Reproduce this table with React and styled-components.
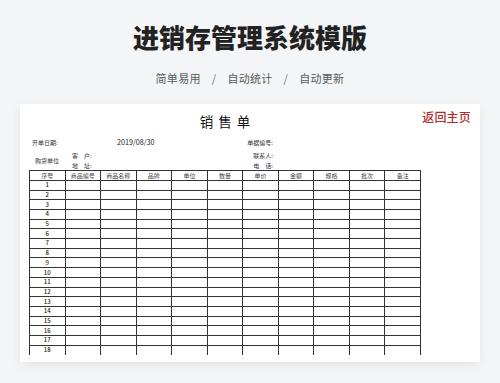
import React from 'react';
import styled, { createGlobalStyle } from 'styled-components';

const GlobalStyle = createGlobalStyle`
  html, body {
    margin: 0;
    padding: 0;
    background: #f4f5f7;
  }
  * {
    box-sizing: border-box;
  }
`;

const font = `"Noto Sans CJK SC", "Noto Sans", sans-serif`;

const COLUMNS = ['序号', '商品编号', '商品名称', '品牌', '单位', '数量', '单价', '金额', '规格', '批次', '备注'];
const ROWS = Array.from({ length: 18 }, (_, i) => i + 1);
const INFO_COLUMNS = '40px 45px 99px 60px 1fr';

const Page = styled.div`
  height: 383px;
  padding: 20px 20px 0;
  background: #f4f5f7;
  font-family: ${font};
  overflow: hidden;
`;

const Title = styled.h1`
  margin: 0;
  font-size: 26px;
  line-height: 34px;
  font-weight: 900;
  color: #222;
  text-align: center;
`;

const Tagline = styled.div`
  margin-top: 16px;
  display: flex;
  justify-content: center;
  font-size: 11px;
  line-height: 16px;
  color: #5a5a5a;
  letter-spacing: 0.3px;
`;

const Slash = styled.span`
  margin: 0 11px;
  color: #777;
`;

const Card = styled.div`
  margin-top: 18px;
  height: 258px;
  background: #fff;
  box-shadow: 0 3px 10px rgba(0, 0, 0, 0.07);
  padding: 7px 9px 0 9px;
  display: grid;
  grid-template-columns: 392px 1fr;
`;

const Sheet = styled.div`
  display: flex;
  flex-direction: column;
`;

const SheetTitle = styled.div`
  height: 20px;
  line-height: 20px;
  font-size: 13.5px;
  letter-spacing: 5px;
  padding-left: 5px;
  text-align: center;
  color: #111;
`;

const InfoGrid = styled.div`
  display: grid;
  grid-template-columns: ${INFO_COLUMNS};
  grid-template-rows: ${(p) => p.$rows};
  align-items: center;
  margin-top: ${(p) => p.$top || 0}px;
  font-size: 6px;
  line-height: 1;
  color: #333;
`;

const Label = styled.div`
  grid-column: ${(p) => p.$col};
  grid-row: ${(p) => p.$row || 'auto'};
  padding-left: ${(p) => p.$indent ?? 3}px;
  text-align: ${(p) => (p.$right ? 'right' : 'left')};
  white-space: pre;
`;

const DateValue = styled.div`
  grid-column: 3;
  padding-left: 3px;
  font-size: 7.2px;
  color: #222;
`;

const Table = styled.table`
  width: 392px;
  border-collapse: collapse;
  table-layout: fixed;
  font-size: 6px;
  line-height: 1;
  color: #333;
`;

const Row = styled.tr`
  height: 9.7px;
`;

const Cell = styled.td`
  padding: 0;
  border: 1px solid #333;
  border-bottom-color: ${(p) => (p.$open ? 'transparent' : '#333')};
  text-align: center;
  vertical-align: middle;
  font-weight: ${(p) => (p.$strong ? 500 : 400)};
  color: ${(p) => (p.$strong ? '#222' : '#444')};
`;

const HeadCell = styled.th`
  padding: 0;
  border: 1px solid #333;
  font-weight: 400;
  text-align: center;
  vertical-align: middle;
  color: #444;
`;

const Aside = styled.div`
  display: flex;
  justify-content: flex-end;
  align-items: flex-start;
`;

const HomeLink = styled.a`
  margin-top: -2px;
  font-size: 12px;
  line-height: 16px;
  font-weight: 500;
  color: #b52d2b;
  text-decoration: none;
  letter-spacing: 0.2px;
`;

const App = () => (
  <Page>
    <GlobalStyle />
    <Title>进销存管理系统模版</Title>
    <Tagline>
      <span>简单易用</span>
      <Slash>/</Slash>
      <span>自动统计</span>
      <Slash>/</Slash>
      <span>自动更新</span>
    </Tagline>
    <Card>
      <Sheet>
        <SheetTitle>销售单</SheetTitle>
        <InfoGrid $rows="10px" $top={6.5}>
          <Label $col={1}>开单日期:</Label>
          <DateValue>2019/08/30</DateValue>
          <Label $col={4} $right>单据编号:</Label>
        </InfoGrid>
        <InfoGrid $rows="9.5px 9.5px" $top={3.8}>
          <Label $col={1} $row="1 / span 2" $indent={6}>购货单位</Label>
          <Label $col={2} $row={1}>客　户:</Label>
          <Label $col={2} $row={2}>地　址:</Label>
          <Label $col={4} $row={1} $right>联系人:</Label>
          <Label $col={4} $row={2} $right>电　话:</Label>
        </InfoGrid>
        <Table>
          <thead>
            <Row>
              {COLUMNS.map((c) => (
                <HeadCell key={c}>{c}</HeadCell>
              ))}
            </Row>
          </thead>
          <tbody>
            {ROWS.map((n) => (
              <Row key={n}>
                {COLUMNS.map((c, i) => (
                  <Cell key={c} $strong={i === 0} $open={n === ROWS.length}>
                    {i === 0 ? n : ''}
                  </Cell>
                ))}
              </Row>
            ))}
          </tbody>
        </Table>
      </Sheet>
      <Aside>
        <HomeLink href="#">返回主页</HomeLink>
      </Aside>
    </Card>
  </Page>
);

export default App;
